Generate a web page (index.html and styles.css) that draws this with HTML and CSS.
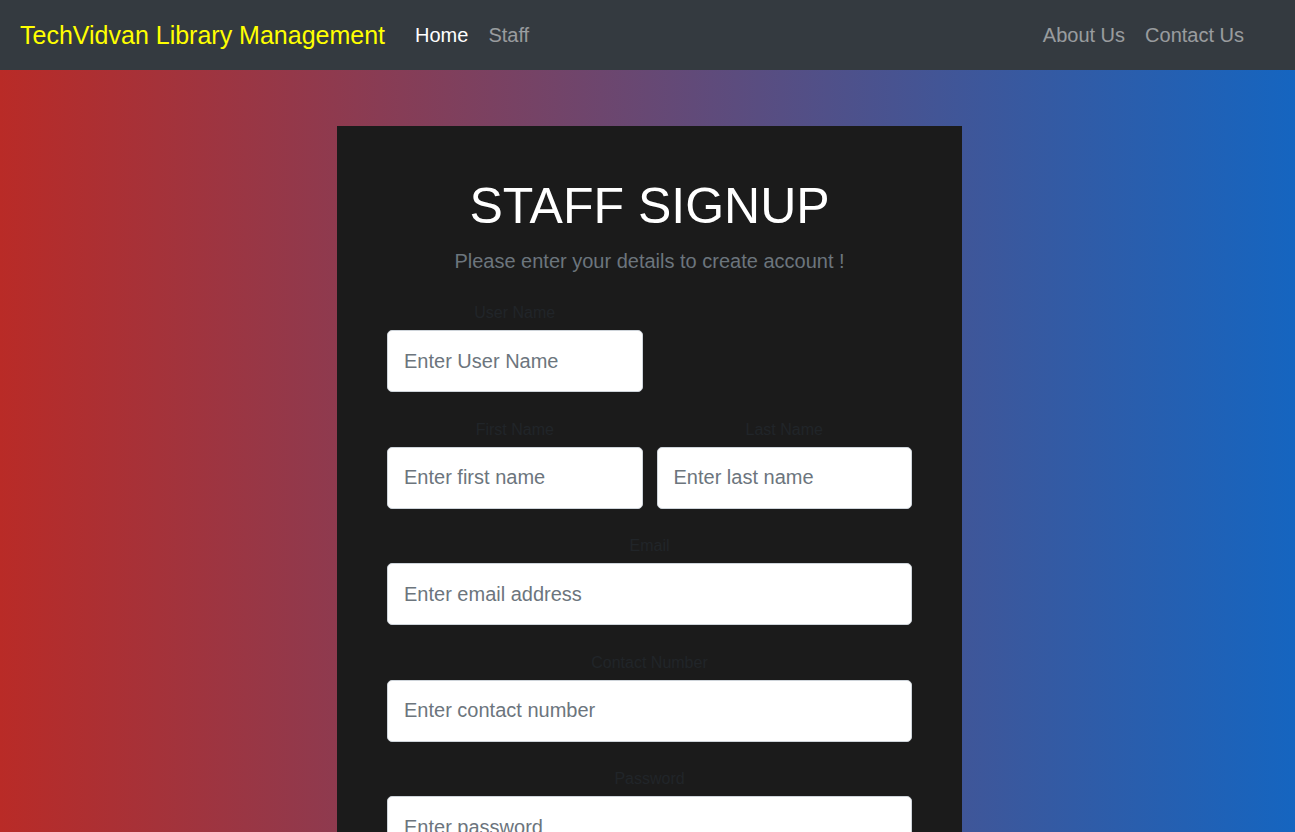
FILE: index.html
```html
<!DOCTYPE html>
<html lang="en">
<head>
<meta charset="utf-8">
<title>Staff Signup - TechVidvan Library Management</title>
<link rel="stylesheet" href="styles.css">
</head>
<body>
<nav class="navbar">
  <a class="brand" href="#">TechVidvan Library Management</a>
  <ul class="nav-left">
    <li><a class="nav-link active" href="#">Home</a></li>
    <li><a class="nav-link" href="#">Staff</a></li>
  </ul>
  <ul class="nav-right">
    <li><a class="nav-link" href="#">About Us</a></li>
    <li><a class="nav-link" href="#">Contact Us</a></li>
  </ul>
</nav>
<main class="hero">
  <section class="card">
    <h1 class="title">STAFF SIGNUP</h1>
    <p class="lead">Please enter your details to create account !</p>
    <form class="form">
      <div class="row">
        <div class="group">
          <label class="label">User Name</label>
          <input class="input" type="text" placeholder="Enter User Name">
        </div>
        <div class="group"></div>
      </div>
      <div class="row">
        <div class="group">
          <label class="label">First Name</label>
          <input class="input" type="text" placeholder="Enter first name">
        </div>
        <div class="group">
          <label class="label">Last Name</label>
          <input class="input" type="text" placeholder="Enter last name">
        </div>
      </div>
      <div class="group">
        <label class="label">Email</label>
        <input class="input" type="email" placeholder="Enter email address">
      </div>
      <div class="group">
        <label class="label">Contact Number</label>
        <input class="input" type="text" placeholder="Enter contact number">
      </div>
      <div class="group">
        <label class="label">Password</label>
        <input class="input" type="password" placeholder="Enter password">
      </div>
      <div class="group">
        <label class="label">Confirm Password</label>
        <input class="input" type="password" placeholder="Confirm password">
      </div>
      <button class="btn" type="button">Sign Up</button>
    </form>
  </section>
</main>
</body>
</html>
```
FILE: styles.css
```css
* { box-sizing: border-box; }
html { overflow-y: scroll; }
html, body { margin: 0; padding: 0; }
body {
  font-family: "Liberation Sans", Arial, sans-serif;
  font-size: 16px;
  line-height: 1.5;
  color: #212529;
  background: #fff;
}
a { text-decoration: none; }
ul { list-style: none; margin: 0; padding: 0; }

.navbar {
  height: 70px;
  background: #343a40;
  display: flex;
  align-items: center;
  padding: 0 41px 0 20px;
}
.brand {
  color: #ffff00;
  font-size: 25px;
  line-height: 36px;
  margin-right: 20px;
}
.nav-left, .nav-right { display: flex; }
.nav-right { margin-left: auto; }
.nav-link {
  display: block;
  font-size: 20px;
  line-height: 30px;
  padding: 0 10px;
  color: rgba(255, 255, 255, 0.5);
}
.nav-link.active { color: #fff; }

.hero {
  background: linear-gradient(to right, #b92b27, #1565c0);
  padding: 56px 0 60px 337px;
}
.card {
  width: 625px;
  background: #1b1b1b;
  padding: 50px;
}
.title {
  margin: 0 0 10px;
  text-align: center;
  color: #fff;
  font-weight: 400;
  font-size: 50px;
  line-height: 1.2;
}
.lead {
  margin: 0 0 25px;
  text-align: center;
  color: #6c757d;
  font-size: 20px;
  line-height: 30px;
}
.form { display: flex; flex-direction: column; }
.row {
  display: grid;
  grid-template-columns: 1fr 1fr;
  column-gap: 14px;
}
.group {
  display: flex;
  flex-direction: column;
  margin-bottom: 25.5px;
}
.label {
  display: block;
  text-align: center;
  color: #212529;
  font-size: 16px;
  line-height: 24px;
  margin-bottom: 5px;
}
.input {
  height: 62px;
  width: 100%;
  border: 1px solid #ced4da;
  border-radius: 5px;
  background: #fff;
  padding: 0 16px;
  font-family: "Liberation Sans", Arial, sans-serif;
  font-size: 20px;
  color: #495057;
}
.input::placeholder { color: #6c757d; opacity: 1; }
.btn {
  margin-top: 10px;
  height: 52px;
  border: none;
  border-radius: 5px;
  background: #007bff;
  color: #fff;
  font-family: "Liberation Sans", Arial, sans-serif;
  font-size: 20px;
}
```
